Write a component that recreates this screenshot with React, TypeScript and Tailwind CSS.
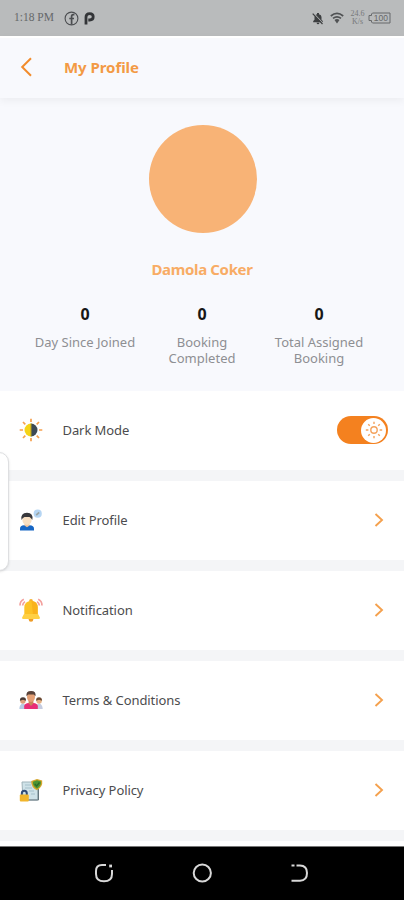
import type { ReactNode } from "react";
import { clsx } from "clsx";

function StatusBar() {
  return (
    <div className="flex h-9 shrink-0 items-center bg-[#b9bbbc] pl-[14px] pr-[13px] text-[#66686a]">
      <span className="w-[41px] whitespace-nowrap font-['Liberation_Serif',serif] text-[11.5px] leading-none">
        1:18 PM
      </span>
      <svg className="ml-[9px] h-[15px] w-[15px]" viewBox="0 0 15 15" fill="none" stroke="#4b4d50">
        <circle cx="7.5" cy="7.5" r="6.4" strokeWidth="1.1" />
        <path d="M10.4 3.7H9.3Q7.6 3.7 7.6 5.5V13.5M5.3 7.5H10" strokeWidth="1.7" />
      </svg>
      <svg className="ml-[5px] h-[14px] w-[12px]" viewBox="0 0 12 14" fill="none" stroke="#333538" strokeWidth="2.8">
        <path d="M2 13.4V6Q2 2.6 5.7 2.6Q9.2 2.6 9.2 5.8Q9.2 9 5.8 9H4.3" />
      </svg>
      <div className="ml-auto flex items-center">
        <svg className="h-[13px] w-[12px]" viewBox="0 0 12 13">
          <path d="M1.2 10.3V9L2.5 7.7V5Q2.6 2.5 5 2.2V1H7V2.2Q9.5 2.6 9.5 5V7.7L10.8 9V10.3ZM4.5 10.8H7.5Q7 12.3 6 12.3T4.5 10.8Z" fill="#3d3f41" />
          <path d="M1.4 1.2L11.2 11.6" stroke="#b9bbbc" strokeWidth="1.1" />
          <path d="M.7 1.7L10.5 12" stroke="#3d3f41" strokeWidth="1.2" />
        </svg>
        <svg className="ml-[6px] h-[12px] w-[14px]" viewBox="0 0 14 12" fill="none" stroke="#505254" strokeWidth="1.7">
          <path d="M.8 4Q7-1.2 13.2 4M3 6.4Q7 3.2 11 6.4" />
          <path d="M4.5 8Q7 6 9.5 8L7 11.4Z" fill="#505254" stroke="none" />
        </svg>
        <div className="ml-[5px] w-[17px] text-center font-['Liberation_Serif',serif] text-[8px] leading-[8px] text-[#77797b]">
          24.6
          <br />
          K/s
        </div>
        <svg className="ml-[2px] h-[12px] w-[23px]" viewBox="0 0 23 12" fill="none" stroke="#66686a">
          <path d="M4.5 1H22V11H4.5L3.5 10V8.5H1V3.5H3.5V2Z" />
          <text x="12.8" y="9" textAnchor="middle" fontSize="8.5" fontFamily="Liberation Sans" fill="#66686a" stroke="none">
            100
          </text>
        </svg>
      </div>
    </div>
  );
}

function Header() {
  return (
    <header className="relative z-10 flex h-[62px] shrink-0 items-center border-t-2 border-white bg-[#f8f9fd] pb-[2px] pl-[20px] shadow-[0_3px_8px_rgba(0,0,0,0.05)]">
      <svg className="h-[20px] w-[13px]" viewBox="0 0 13 20" fill="none" stroke="#f28c2c" strokeWidth="2">
        <path d="M11 1.2L2.2 10L11 18.8" />
      </svg>
      <h1 className="ml-[31px] text-[15px] font-bold tracking-[-0.05px] text-[#f39a45]">My Profile</h1>
    </header>
  );
}

interface StatProps {
  value: number;
  label: string;
  className?: string;
}

function Stat({ value, label, className }: StatProps) {
  return (
    <div className={clsx("text-center", className)}>
      <p className="text-[16px] font-bold leading-[20px] text-[#171717]">{value}</p>
      <p className="mt-[10px] text-[13px] leading-[16px] text-[#8e8f93]">{label}</p>
    </div>
  );
}

function Summary() {
  return (
    <section className="flex h-[293px] shrink-0 flex-col items-center bg-[#f8f9fd] pt-[27px]">
      <div className="ml-px h-[108px] w-[108px] rounded-full bg-[#f8b376]" />
      <h2 className="mt-[25px] text-[15px] font-bold leading-[22px] tracking-[-0.35px] text-[#f8ac65]">Damola Coker</h2>
      <div className="mt-[24px] flex w-full justify-center gap-[3px]">
        <Stat value={0} label="Day Since Joined" className="w-[114px]" />
        <Stat value={0} label="Booking Completed" className="w-[114px] px-4" />
        <Stat value={0} label="Total Assigned Booking" className="w-[114px] px-1" />
      </div>
    </section>
  );
}

function SunIcon() {
  return (
    <svg className="h-6 w-6" viewBox="0 0 24 24">
      <path d="M12 .7V4M12 20V23.3M.7 12H4M20 12H23.3M4 4L6.3 6.3M17.7 17.7L20 20M20 4L17.7 6.3M6.3 17.7L4 20" stroke="#f6a04d" strokeWidth="1.7" />
      <path d="M12 5.5A6.5 6.5 0 0 0 12 18.5Z" fill="#f5d416" />
      <path d="M12 5.5A6.5 6.5 0 0 1 12 18.5Z" fill="#3d4a55" />
      <path d="M12 5.5V18.5" stroke="#b29b22" />
    </svg>
  );
}

function EditProfileIcon() {
  return (
    <svg className="h-6 w-6" viewBox="0 0 24 24">
      <path d="M1 22.5V20.5Q1 17.5 5 17.2H10.5Q15 17.5 15 20.5V22.5Z" fill="#1766c4" />
      <path d="M5.5 15H10.5V17.5L8 19.2L5.5 17.5Z" fill="#efc59e" />
      <ellipse cx="8" cy="12" rx="4.6" ry="4.9" fill="#f8dfc2" />
      <path d="M2.5 12Q1.2 5 8 4.8Q14.8 5 13.3 12L12 10.3L10.5 9.1H5.5L3.7 10.2Z" fill="#38383c" />
      <circle cx="18.7" cy="5.7" r="4.1" fill="#b5d5f3" />
      <path d="M17.2 7.2L20.2 4.3" stroke="#9ba5a4" strokeWidth="1.7" />
    </svg>
  );
}

function BellIcon() {
  return (
    <svg className="h-6 w-6" viewBox="0 0 24 24">
      <path d="M1 7.5Q1 3 4.8 1.3M3.6 7.5Q3.8 5 6 3.6M23 7.5Q23 3 19.2 1.3M20.4 7.5Q20.2 5 18 3.6" fill="none" stroke="#f3a09d" strokeWidth="1.7" />
      <circle cx="12" cy="21.5" r="2.3" fill="#ee9b27" />
      <circle cx="12" cy="2.9" r="1.9" fill="#f6b02c" />
      <path d="M5.3 17V9.5Q5.5 3 12 3T18.7 9.5V17Z" fill="#fcc226" />
      <path d="M12.5 3Q18.7 3.3 18.7 9.5V17H14Z" fill="#f9b21c" />
      <path d="M5 16H19L21 19.8Q20.8 21 19.8 21H4.2Q3.2 21 3 19.8Z" fill="#ffd044" />
    </svg>
  );
}

function PeopleIcon() {
  return (
    <svg className="h-6 w-6" viewBox="0 0 24 24">
      <path d="M.3 21Q.5 16 4 15.5Q7 16 7 21Z" fill="#b8cae3" />
      <path d="M17 21Q17 16 20 15.5Q23.5 16 23.7 21Z" fill="#c5cce0" />
      <circle cx="3.9" cy="13" r="2.7" fill="#dda27d" />
      <circle cx="20.1" cy="13" r="2.7" fill="#e6b183" />
      <path d="M.9 12.7Q.8 9.3 4 9.3T7 12.7L4 11.7Z" fill="#493b36" />
      <path d="M17 12.7Q17 9.3 20 9.3T23.1 12.7L20 11.7Z" fill="#6b4932" />
      <path d="M5.2 21V18.3Q5.2 15.7 9 15H15Q18.8 15.7 18.8 18.3V21Z" fill="#e92e77" />
      <path d="M9.6 12.5H14.4V15.3L12 18L9.6 15.3Z" fill="#ca845c" />
      <ellipse cx="12" cy="9" rx="4" ry="4.9" fill="#e5a075" />
      <path d="M7.5 8.3Q6.7 3.2 12 3.1T16.5 8.3L14.7 6.5H9.3Z" fill="#594239" />
    </svg>
  );
}

function PrivacyIcon() {
  return (
    <svg className="h-6 w-6" viewBox="0 0 24 24">
      <path d="M3 4H18.5V22H4Z" fill="#cfe2e8" stroke="#9fb3ba" />
      <path d="M6 7H12M6 10H13M10 13H15M12 16H16" stroke="#a5bfc9" strokeWidth="1.2" />
      <path d="M19.5 11V22H9" fill="none" stroke="#66777e" />
      <path d="M18 1L23.2 2.5Q24 9 18 12.3Q12 9.5 12.3 3Z" fill="#d4a52a" />
      <path d="M18 2.3L22 3.5Q22.2 8.2 18 10.8Q13.5 8.2 13.9 3.8Z" fill="#4b9433" />
      <path d="M15.8 6L17.7 8L20.5 4.5" fill="none" stroke="#2b6a29" strokeWidth="1.3" />
      <path d="M2.8 17V15.5Q2.8 12.8 5.3 12.8T7.8 15.5V17" fill="none" stroke="#304c78" strokeWidth="2" />
      <rect x=".8" y="16.5" width="9" height="7" rx="1" fill="#f1b52b" />
    </svg>
  );
}

function Chevron() {
  return (
    <svg className="mr-[4px] h-[16px] w-[10px]" viewBox="0 0 10 16" fill="none" stroke="#f4a04d" strokeWidth="1.9">
      <path d="M1.5 2L8 8L1.5 14" />
    </svg>
  );
}

function ThemeSwitch() {
  return (
    <button
      className="flex h-[28px] w-[51px] items-center justify-end rounded-full bg-[#f4811f] pr-[2px]"
      role="switch"
      aria-checked="true"
      aria-label="Dark Mode"
    >
      <span className="flex h-[25px] w-[25px] items-center justify-center rounded-full bg-white">
        <svg className="h-[18px] w-[18px]" viewBox="0 0 18 18" fill="none" stroke="#f4a35e" strokeWidth="1.4">
          <circle cx="9" cy="9" r="3.2" />
          <path d="M9 .8V3M9 15V17.2M.8 9H3.4M14.6 9H17.2M3.2 3.2L4.8 4.8M13.2 13.2L14.8 14.8M14.8 3.2L13.2 4.8M4.8 13.2L3.2 14.8" />
        </svg>
      </span>
    </button>
  );
}

interface MenuRowProps {
  icon: ReactNode;
  label: string;
  action?: ReactNode;
}

function MenuRow({ icon, label, action = <Chevron /> }: MenuRowProps) {
  return (
    <div className="flex h-[79px] shrink-0 items-center bg-white pb-px pl-[19px] pr-[16px]">
      {icon}
      <span className="ml-[19.5px] pt-[2px] text-[13px] tracking-[-0.08px] text-[#4c4c4e]">{label}</span>
      <div className="ml-auto">{action}</div>
    </div>
  );
}

function NavigationBar() {
  return (
    <nav className="flex h-[54px] shrink-0 items-center justify-center gap-[78px] border-t border-[#777] bg-black pb-px">
      <svg className="h-5 w-5" viewBox="0 0 20 20" fill="none" stroke="#d8d8d8" strokeWidth="2">
        <path d="M12 2H8Q2 2 2 8V11Q2 18.3 10 18.3T18 11V7" />
        <path d="M15.2 3H18" strokeWidth="2.8" />
      </svg>
      <svg className="h-5 w-5" viewBox="0 0 20 20" fill="none" stroke="#d8d8d8" strokeWidth="2">
        <circle cx="10.3" cy="10" r="8.6" />
      </svg>
      <svg className="h-5 w-5" viewBox="0 0 20 20" fill="none" stroke="#d8d8d8" strokeWidth="2">
        <path d="M6.5 2.5H10Q17 2.5 17 10T10 17.8H1.5M1.5 2.5H4.5" />
      </svg>
    </nav>
  );
}

export default function App() {
  return (
    <div className="relative flex h-[900px] w-[404px] flex-col overflow-hidden bg-[#f4f5f7] font-['Noto_Sans',sans-serif]">
      <StatusBar />
      <Header />
      <Summary />
      <main className="flex h-[455px] shrink-0 flex-col gap-[11px] overflow-hidden">
        <MenuRow icon={<SunIcon />} label="Dark Mode" action={<ThemeSwitch />} />
        <MenuRow icon={<EditProfileIcon />} label="Edit Profile" />
        <MenuRow icon={<BellIcon />} label="Notification" />
        <MenuRow icon={<PeopleIcon />} label="Terms & Conditions" />
        <MenuRow icon={<PrivacyIcon />} label="Privacy Policy" />
        <div className="h-[79px] shrink-0 bg-white" />
      </main>
      <NavigationBar />
      {/* Edge panel handle, floats over the list */}
      <div className="absolute -left-3 top-[452px] h-[119px] w-[21px] rounded-[10px] border border-[#dedfe1] bg-white shadow-sm" />
    </div>
  );
}
